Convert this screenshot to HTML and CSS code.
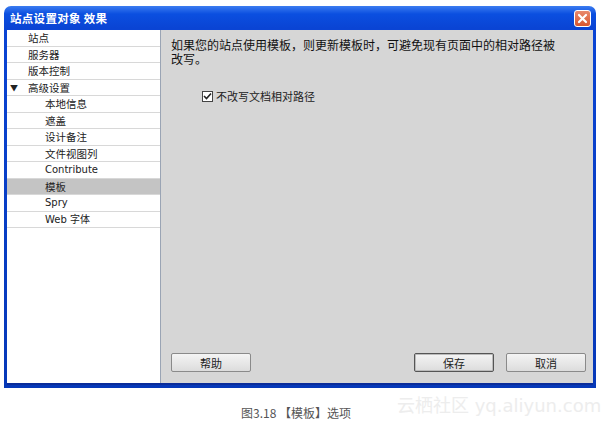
FILE: index.html
```html
<!DOCTYPE html>
<html lang="zh-cn">
<head>
    <meta charset="UTF-8">
    <title>站点设置对象 效果</title>
    <link rel="stylesheet" href="styles.css">
</head>
<body>
    <div class="window">
        <div class="titlebar">
            <span class="title">站点设置对象 效果</span>
            <span class="close">
                <svg width="17" height="17" viewBox="0 0 17 17">
                    <path d="M5 5 L12 12 M12 5 L5 12" stroke="#fff" stroke-width="2.2" stroke-linecap="round"/>
                </svg>
            </span>
        </div>
        <div class="body">
            <ul class="nav">
                <li>站点</li>
                <li>服务器</li>
                <li>版本控制</li>
                <li class="group"><span class="arrow">▼</span>高级设置</li>
                <li class="sub">本地信息</li>
                <li class="sub">遮盖</li>
                <li class="sub">设计备注</li>
                <li class="sub">文件视图列</li>
                <li class="sub latin">Contribute</li>
                <li class="sub active">模板</li>
                <li class="sub latin">Spry</li>
                <li class="sub latin">Web 字体</li>
            </ul>
            <div class="panel">
                <p class="desc">如果您的站点使用模板，则更新模板时，可避免现有页面中的相对路径被改写。</p>
                <label class="check">
                    <span class="box">
                        <svg width="9" height="9" viewBox="0 0 9 9">
                            <path d="M1 4 L3.5 6.5 L8 1.5" stroke="#222" stroke-width="1.6" fill="none"/>
                        </svg>
                    </span>
                    不改写文档相对路径
                </label>
                <div class="buttons">
                    <button class="btn">帮助</button>
                    <div class="right">
                        <button class="btn default">保存</button>
                        <button class="btn">取消</button>
                    </div>
                </div>
            </div>
        </div>
    </div>
    <div class="footer">
        <span class="caption">图3.18 【模板】选项</span>
        <span class="mark">云栖社区 yq.aliyun.com</span>
    </div>
</body>
</html>
```

FILE: styles.css
```css
body {
    margin: 0;
    background: #fff;
    font-family: "Noto Sans CJK SC", "DejaVu Sans", sans-serif;
    font-size: 11px;
    color: #222;
}
.window {
    margin: 6px 0 0 4px;
    width: 592px;
    height: 382px;
    border-radius: 7px 7px 0 0;
    padding: 0 3px 3px 3px;
    box-sizing: border-box;
    display: flex;
    flex-direction: column;
    background: linear-gradient(#3b7cf0, #0b4fe0 8px, #0a44d4 22px, #0638b8);
}
.titlebar {
    height: 24px;
    display: flex;
    align-items: center;
    justify-content: space-between;
    padding: 0 2px 0 3px;
}
.title {
    color: #fff;
    font-weight: bold;
    font-size: 11.5px;
    letter-spacing: 0.3px;
}
.close {
    width: 17px;
    height: 17px;
    border: 1px solid #fff;
    border-radius: 3px;
    background: linear-gradient(#e88a6e, #d9562e);
    display: flex;
    box-sizing: border-box;
    align-items: center;
    justify-content: center;
}
.close svg {
    flex: none;
}
.body {
    flex: 1;
    display: flex;
    background: #d6d6d6;
    border-bottom: 2px solid #0a2c9a;
}
.nav {
    list-style: none;
    margin: 0;
    padding: 0;
    width: 153px;
    background: #fff;
    border-right: 1px solid #9aa4b4;
}
.nav li {
    height: 16.5px;
    line-height: 16px;
    border-bottom: 1px solid #d8d8d8;
    box-sizing: border-box;
    padding-left: 21px;
    position: relative;
    font-size: 10.5px;
}
.nav li.sub {
    padding-left: 38px;
}
.nav li.latin {
    font-family: "DejaVu Sans", sans-serif;
    font-size: 10px;
}
.nav li.active {
    background: #c4c4c4;
}
.arrow {
    position: absolute;
    left: 3px;
    font-size: 8px;
}
.panel {
    flex: 1;
    display: flex;
    flex-direction: column;
    padding: 8px 7px 11px 10px;
}
.desc {
    margin: 0;
    max-width: 392px;
    font-size: 12px;
    line-height: 14px;
    color: #111;
}
.check {
    margin: 22px 0 0 31px;
    display: flex;
    align-items: center;
    gap: 3px;
    font-size: 11px;
}
.box {
    width: 9px;
    height: 9px;
    border: 1px solid #444;
    background: #fff;
    display: flex;
}
.buttons {
    margin-top: auto;
    display: flex;
    justify-content: space-between;
}
.right {
    display: flex;
    gap: 12px;
}
.btn {
    width: 80px;
    height: 19px;
    padding: 0;
    font-family: "Noto Sans CJK SC", sans-serif;
    font-size: 11px;
    color: #222;
    background: linear-gradient(#f4f4f4, #dcdcdc);
    border: 1px solid #8a8a8a;
    border-radius: 2px;
}
.btn.default {
    border: 1px solid #555;
    box-shadow: inset 0 0 0 1px #bbb;
}
.footer {
    position: relative;
    height: 36px;
}
.caption {
    position: absolute;
    left: 241px;
    top: 16px;
    font-size: 12px;
    color: #555;
}
.mark {
    position: absolute;
    left: 397px;
    top: 3px;
    white-space: nowrap;
    font-family: "DejaVu Sans", sans-serif;
    font-size: 18px;
    color: #ededed;
}
```
